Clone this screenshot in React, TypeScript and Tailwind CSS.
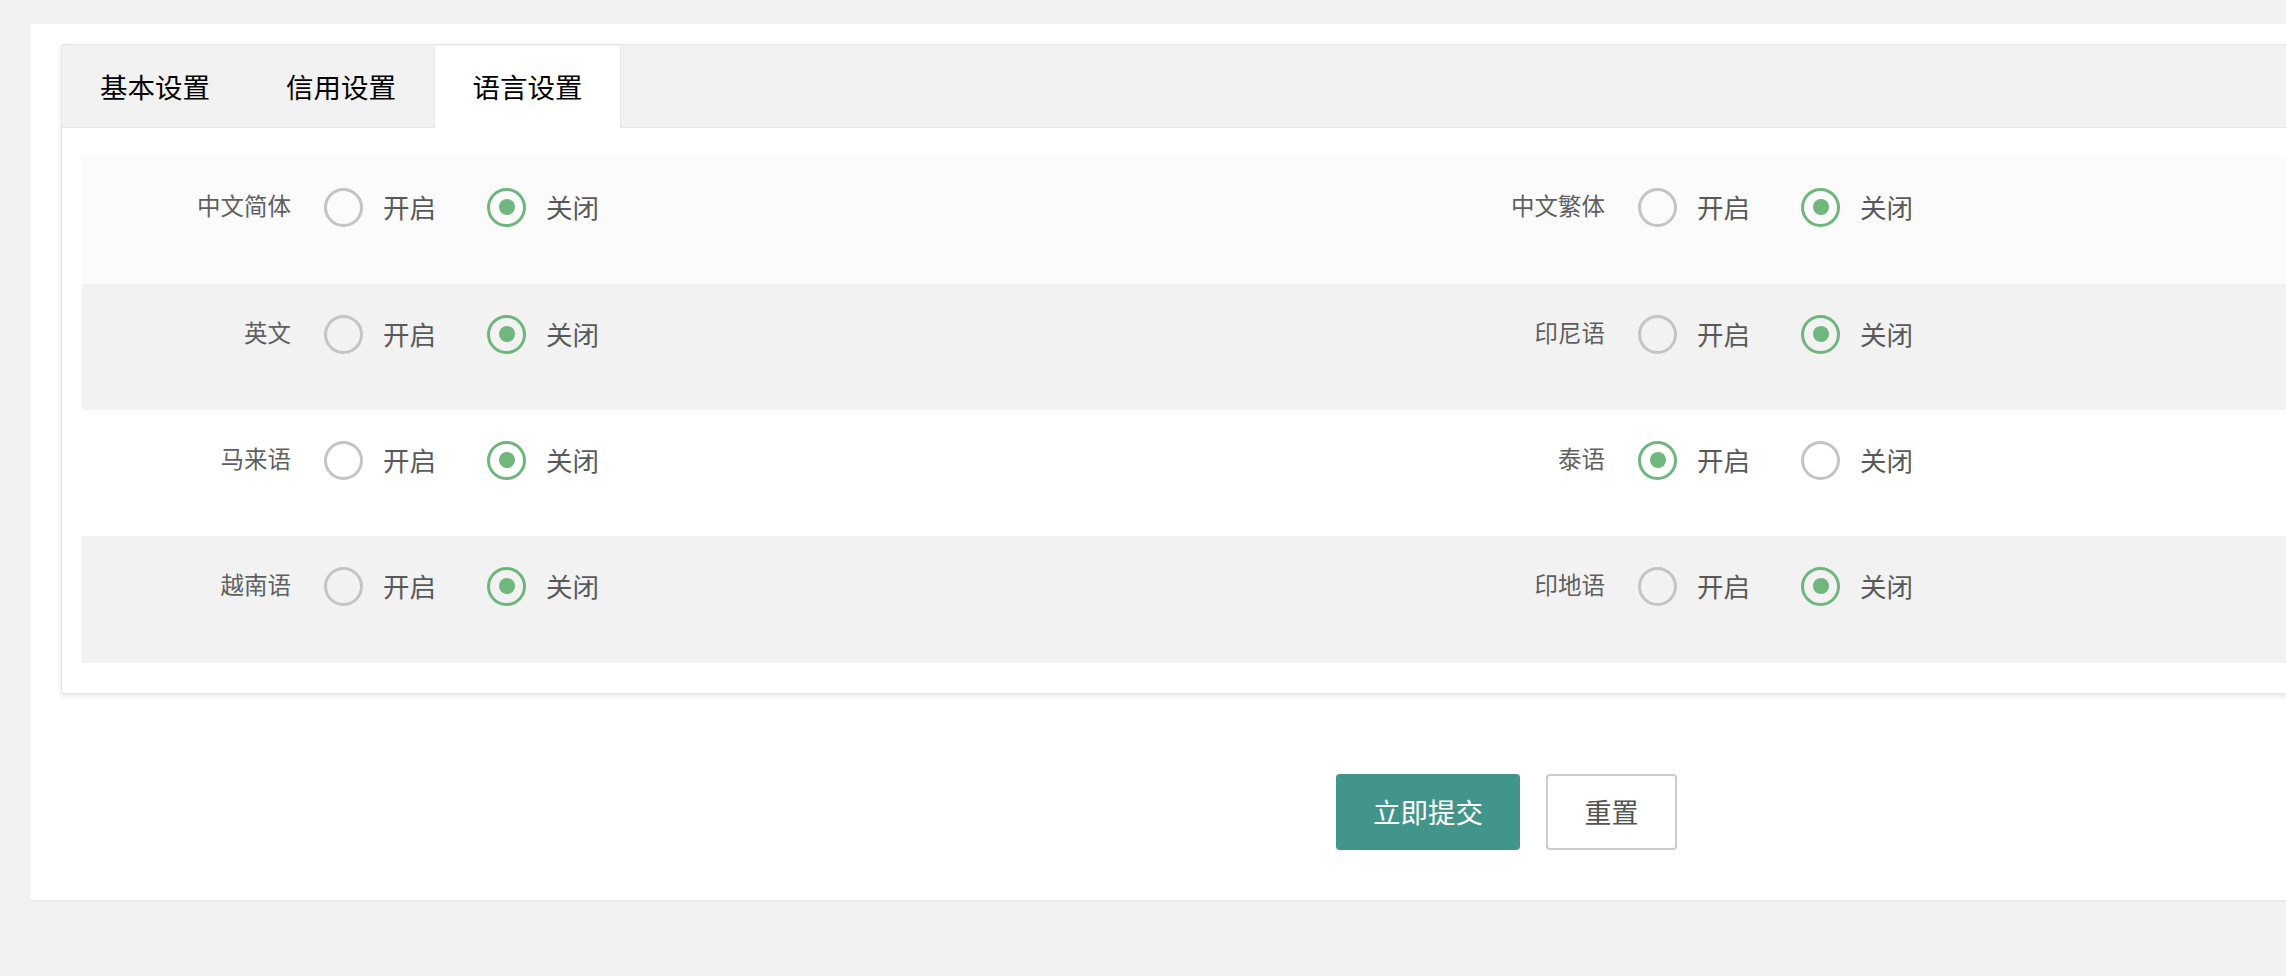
import React from 'react';

interface LangSetting {
	name: string;
	enabled: boolean;
}

const rows: { bg: string; h: string; items: LangSetting[] }[] = [
	{ bg: 'bg-[#fbfbfb]', h: 'h-[127px]', items: [{ name: '中文简体', enabled: false }, { name: '中文繁体', enabled: false }] },
	{ bg: 'bg-[#f2f2f2]', h: 'h-[126px]', items: [{ name: '英文', enabled: false }, { name: '印尼语', enabled: false }] },
	{ bg: 'bg-white', h: 'h-[126px]', items: [{ name: '马来语', enabled: false }, { name: '泰语', enabled: true }] },
	{ bg: 'bg-[#f2f2f2]', h: 'h-[127px]', items: [{ name: '越南语', enabled: false }, { name: '印地语', enabled: false }] },
];

const tabs = ['基本设置', '信用设置', '语言设置'];

const Radio: React.FC<{ checked: boolean; label: string; className?: string }> = ({ checked, label, className = '' }) => (
	<div className={`flex items-center ${className}`}>
		<span
			className={`w-[39px] h-[39px] rounded-full border-[3px] flex items-center justify-center ${
				checked ? 'border-[#6fb67c]' : 'border-[#c4c4c4]'
			}`}
		>
			{checked && <span className="w-[16px] h-[16px] rounded-full bg-[#70b67d]" />}
		</span>
		<span className="ml-[20px] text-[26.5px] leading-none text-[#595959]">{label}</span>
	</div>
);

const LangField: React.FC<{ item: LangSetting }> = ({ item }) => (
	<div className="w-[1314px] flex items-center h-[40px]">
		<div className="w-[209px] text-right text-[23.5px] leading-none text-[#5f5f5f] -mt-[2px]">{item.name}</div>
		<Radio checked={item.enabled} label="开启" className="ml-[33px]" />
		<Radio checked={!item.enabled} label="关闭" className="ml-[51px]" />
	</div>
);

export default function App() {
	return (
		<div
			className="w-[2286px] h-[976px] overflow-hidden bg-[#f2f2f2] pl-[30px] pt-[24px]"
			style={{ fontFamily: '"Noto Sans CJK SC", "Noto Sans", sans-serif' }}
		>
			<div className="w-[2800px] h-[876px] bg-white rounded-[3px] shadow-[0_1px_2px_0_rgba(0,0,0,0.05)] pt-[20px] pl-[31px]">
				{/* Tab card */}
				<div className="w-[2750px] border border-[#e6e6e6] rounded-[2px] shadow-[0_2px_5px_0_rgba(0,0,0,0.1)] bg-white">
					<div className="h-[83px] bg-[#f2f2f2] border-b border-[#e6e6e6] flex pt-[1px]">
						{tabs.map((t, i) =>
							i === 2 ? (
								<div
									key={t}
									className="w-[187px] h-[82px] -mb-px bg-white border-x border-[#e6e6e6] rounded-t-[2px] flex items-center justify-center text-[27.5px] text-black"
								>
									{t}
								</div>
							) : (
								<div key={t} className="w-[186px] h-[81px] flex items-center justify-center text-[27.5px] text-black">
									{t}
								</div>
							)
						)}
					</div>

					<div className="pt-[29px] pb-[30px] pl-[20px]">
						{rows.map((row, idx) => (
							<div key={idx} className={`${row.h} pt-[30px] flex ${row.bg}`}>
								{row.items.map((item) => (
									<LangField key={item.name} item={item} />
								))}
							</div>
						))}
					</div>
				</div>

				{/* Actions */}
				<div className="flex mt-[80px] ml-[1275px] gap-[26px]">
					<button className="w-[184px] h-[76px] rounded-[4px] bg-[#42958a] text-white text-[27.5px]">立即提交</button>
					<button className="w-[131px] h-[76px] rounded-[4px] border-2 border-[#cccccc] bg-white text-[#555] text-[27px]">重置</button>
				</div>
			</div>
		</div>
	);
}
